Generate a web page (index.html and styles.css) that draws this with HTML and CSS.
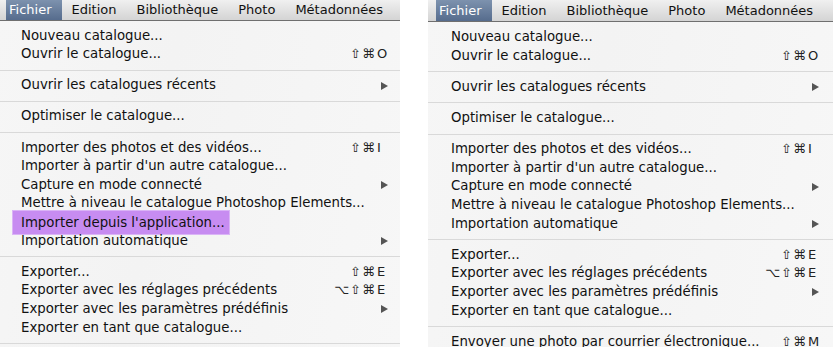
FILE: index.html
```html
<!DOCTYPE html>
<html lang="fr">
<head>
    <meta charset="UTF-8">
    <meta name="viewport" content="width=device-width, initial-scale=1.0">
    <title>Menu Fichier</title>
    <link rel="stylesheet" href="styles.css">
</head>
<body>
    <div class="screens">
        <div class="shot shot-left">
            <div class="menubar">
                <span class="title active">Fichier</span>
                <span class="title">Edition</span>
                <span class="title">Bibliothèque</span>
                <span class="title">Photo</span>
                <span class="title">Métadonnées</span>
            </div>
            <ul class="menu">
                <li class="item"><span>Nouveau catalogue...</span></li>
                <li class="item"><span>Ouvrir le catalogue...</span><span class="keys"><span class="mods">⇧⌘</span><span class="key">O</span></span></li>
                <li class="sep"></li>
                <li class="item"><span>Ouvrir les catalogues récents</span><span class="arrow"></span></li>
                <li class="sep"></li>
                <li class="item"><span>Optimiser le catalogue...</span></li>
                <li class="sep"></li>
                <li class="item"><span>Importer des photos et des vidéos...</span><span class="keys"><span class="mods">⇧⌘</span><span class="key">I</span></span></li>
                <li class="item"><span>Importer à partir d'un autre catalogue...</span></li>
                <li class="item"><span>Capture en mode connecté</span><span class="arrow"></span></li>
                <li class="item"><span>Mettre à niveau le catalogue Photoshop Elements...</span></li>
                <li class="item"><span class="marked">Importer depuis l'application...</span></li>
                <li class="item"><span>Importation automatique</span><span class="arrow"></span></li>
                <li class="sep"></li>
                <li class="item"><span>Exporter...</span><span class="keys"><span class="mods">⇧⌘</span><span class="key">E</span></span></li>
                <li class="item"><span>Exporter avec les réglages précédents</span><span class="keys"><span class="mods">⌥⇧⌘</span><span class="key">E</span></span></li>
                <li class="item"><span>Exporter avec les paramètres prédéfinis</span><span class="arrow"></span></li>
                <li class="item"><span>Exporter en tant que catalogue...</span></li>
                <li class="sep"></li>
            </ul>
        </div>

        <div class="shot shot-right">
            <div class="menubar">
                <span class="title active">Fichier</span>
                <span class="title">Edition</span>
                <span class="title">Bibliothèque</span>
                <span class="title">Photo</span>
                <span class="title">Métadonnées</span>
            </div>
            <ul class="menu">
                <li class="item"><span>Nouveau catalogue...</span></li>
                <li class="item"><span>Ouvrir le catalogue...</span><span class="keys"><span class="mods">⇧⌘</span><span class="key">O</span></span></li>
                <li class="sep"></li>
                <li class="item"><span>Ouvrir les catalogues récents</span><span class="arrow"></span></li>
                <li class="sep"></li>
                <li class="item"><span>Optimiser le catalogue...</span></li>
                <li class="sep"></li>
                <li class="item"><span>Importer des photos et des vidéos...</span><span class="keys"><span class="mods">⇧⌘</span><span class="key">I</span></span></li>
                <li class="item"><span>Importer à partir d'un autre catalogue...</span></li>
                <li class="item"><span>Capture en mode connecté</span><span class="arrow"></span></li>
                <li class="item"><span>Mettre à niveau le catalogue Photoshop Elements...</span></li>
                <li class="item"><span>Importation automatique</span><span class="arrow"></span></li>
                <li class="sep"></li>
                <li class="item"><span>Exporter...</span><span class="keys"><span class="mods">⇧⌘</span><span class="key">E</span></span></li>
                <li class="item"><span>Exporter avec les réglages précédents</span><span class="keys"><span class="mods">⌥⇧⌘</span><span class="key">E</span></span></li>
                <li class="item"><span>Exporter avec les paramètres prédéfinis</span><span class="arrow"></span></li>
                <li class="item"><span>Exporter en tant que catalogue...</span></li>
                <li class="sep"></li>
                <li class="item"><span>Envoyer une photo par courrier électronique...</span><span class="keys"><span class="mods">⇧⌘</span><span class="key">M</span></span></li>
            </ul>
        </div>
    </div>
</body>
</html>
```

FILE: styles.css
```css
body {
    margin: 0;
    background-color: #fff;
    font-family: "DejaVu Sans", Verdana, sans-serif;
    color: #111;
    overflow: hidden;
}
.screens {
    display: flex;
    gap: 28px;
    height: 347px;
}
.shot {
    height: 347px;
    overflow: hidden;
    background: linear-gradient(100deg, #f6f6f6 0%, #f3f3f3 40%, #f7f7f7 100%);
}
.shot-left {
    width: 400px;
}
.shot-right {
    width: 405px;
}
.menubar {
    display: flex;
    height: 20px;
    line-height: 20px;
    font-size: 13px;
    padding-left: 6px;
    background: linear-gradient(#f0f0f0, #d4d4d4);
    border-bottom: 1px solid #6f6f6f;
}
.shot-right .menubar {
    height: 21px;
    line-height: 21px;
    padding-left: 8px;
}
.title {
    padding: 0 10px;
    color: #111;
}
.title.active {
    padding-left: 3px;
    padding-right: 10px;
    color: #fff;
    background: linear-gradient(#7d92ae, #566c8d);
}
.menu {
    list-style: none;
    margin: 0;
    padding: 5.5px 0 0;
    font-size: 13.3px;
}
.shot-right .menu {
    padding-top: 6px;
}
.item {
    display: flex;
    align-items: center;
    justify-content: space-between;
    height: 18.6px;
    line-height: 18.6px;
    padding: 0 11px 0 21px;
    white-space: nowrap;
}
.shot-right .item {
    padding: 0 13px 0 23px;
}
.sep {
    height: 1px;
    margin: 6px 0 5.6px;
    background-color: #d9d9d9;
}
.keys {
    display: flex;
    font-size: 13px;
    color: #222;
}
.mods {
    letter-spacing: 1px;
}
.key {
    width: 12px;
    padding-left: 1px;
}
.arrow {
    width: 0;
    height: 0;
    margin-right: 1px;
    border-left: 7px solid #555;
    border-top: 4.5px solid transparent;
    border-bottom: 4.5px solid transparent;
}
.marked {
    margin-left: -8px;
    padding: 3px 4px 1px 8px;
    background-color: #c78cf1;
    box-shadow: 0 0 0 1px #dab4f6;
}
```
